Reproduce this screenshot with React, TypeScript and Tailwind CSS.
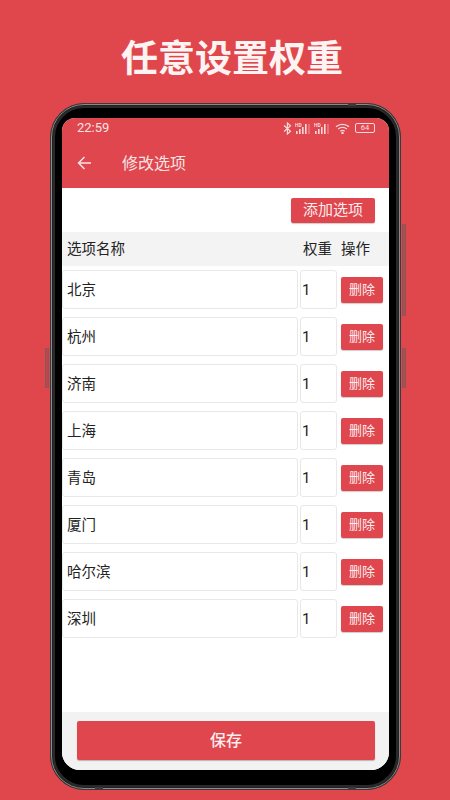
import React from "react";

const rows = ["北京", "杭州", "济南", "上海", "青岛", "厦门", "哈尔滨", "深圳"];

function Signal() {
  return (
    <svg width="16" height="12" viewBox="0 0 16 12" fill="#f6dadb">
      <text x="0" y="4.5" fontSize="5" fontWeight="700" fontFamily="Roboto, sans-serif">HD</text>
      <rect x="1" y="9" width="1.6" height="3" />
      <rect x="4" y="7" width="1.6" height="5" />
      <rect x="7" y="5" width="1.6" height="7" />
      <rect x="10" y="2" width="1.6" height="10" />
      <rect x="13.5" y="2" width="1" height="10" opacity="0.6" />
    </svg>
  );
}

function Row({ name }: { name: string }) {
  return (
    <div className="flex h-[47px] items-start pt-[4px]">
      <div className="flex h-[39px] w-[236px] items-center rounded-[3px] border border-[#e8e8e8] pl-[4px] pt-[2px] text-[14.5px] text-[#222222]">
        {name}
      </div>
      <div className="ml-[2px] flex h-[39px] w-[37px] items-center rounded-[3px] border border-[#e8e8e8] pl-[1px] pt-[2px] text-[15px] text-[#222222]">
        1
      </div>
      <div className="ml-[4px] mt-[7px] flex h-[26px] w-[42px] items-center justify-center rounded-[2px] bg-[#df464d] text-[13px] text-[#fbeeee] shadow-[0_1px_1px_rgba(0,0,0,0.2)]">
        删除
      </div>
    </div>
  );
}

export default function App() {
  return (
    <div className="flex h-[800px] w-[450px] flex-col items-center overflow-hidden bg-[#e0474c] font-['Roboto','Noto_Sans_CJK_SC',sans-serif]">
      <h1 className="ml-[14px] mt-[37px] h-[66px] text-[37px] font-bold leading-[46px] text-[#fdf3f3]">
        任意设置权重
      </h1>

      <div className="relative ml-[1px] h-[687px] w-[351px] rounded-[34px] border border-[#3a3a3a] bg-[#141414]">
        <div className="absolute left-[-6px] top-[244px] h-[40px] w-[4px] rounded-l-[1px] border border-[#7d5a5c] bg-[#b9474b]" />
        <div className="absolute right-[-6px] top-[120px] h-[92px] w-[4px] rounded-r-[1px] border border-[#7d5a5c] bg-[#b9474b]" />
        <div className="absolute right-[-6px] top-[244px] h-[40px] w-[4px] rounded-r-[1px] border border-[#7d5a5c] bg-[#b9474b]" />
        <div className="absolute left-[44px] bottom-[-1px] h-[3px] w-[8px] bg-[#3a3a3a]" />
        <div className="absolute right-[44px] bottom-[-1px] h-[3px] w-[8px] bg-[#3a3a3a]" />
        <div className="absolute right-[44px] top-[-1px] h-[3px] w-[8px] bg-[#3a3a3a]" />

        <div className="h-full w-full rounded-[33px] border border-[#8a8a8a] bg-[#222222] p-[1px]">
          <div className="h-full w-full rounded-[31px] border-[2px] border-[#2a2a2a] bg-black px-[7px] pb-[14px] pt-[10px]">
            <div className="flex h-[652px] w-[327px] flex-col overflow-hidden rounded-b-[18px] rounded-t-[13px] bg-white">
              <div className="flex h-[20px] shrink-0 items-center justify-between bg-[#df464d] pl-[15px] pr-[14px] text-[13px] text-[#f8e4e4]">
                <span>22:59</span>
                <div className="flex items-center gap-[3px]">
                  <svg width="9" height="13" viewBox="0 0 9 13" fill="none" stroke="#f6dadb" strokeWidth="1.2">
                    <path d="M1 3.5 7.5 9.2 4.4 12V1l3.1 2.8L1 9.5" />
                  </svg>
                  <Signal />
                  <Signal />
                  <svg className="ml-[2px]" width="15" height="11" viewBox="0 0 15 11" fill="none" stroke="#f6dadb" strokeWidth="1.3">
                    <path d="M1 3.8c3.6-3.2 9.4-3.2 13 0M3.2 6c2.4-2.1 6.2-2.1 8.6 0M5.4 8.2c1.2-1 3-1 4.2 0" />
                    <circle cx="7.5" cy="10" r="0.6" fill="#f6dadb" />
                  </svg>
                  <div className="ml-[2px] flex h-[10px] w-[20px] items-center justify-center rounded-[2px] border border-[#f6dadb] text-[7.5px] leading-none">
                    64
                  </div>
                </div>
              </div>

              <div className="flex h-[50px] shrink-0 items-center bg-[#df464d] pl-[15px] text-[#f8e4e4]">
                <svg width="15" height="14" viewBox="0 0 15 14" fill="none" stroke="#f8e4e4" strokeWidth="1.5">
                  <path d="M14 7H1.5M7.5 1 1.5 7l6 6" />
                </svg>
                <span className="ml-[30px] pt-[1px] text-[16px]">修改选项</span>
              </div>

              <div className="flex h-[44px] shrink-0 items-start justify-end pr-[14px] pt-[10px]">
                <div className="flex h-[25px] w-[84px] items-center justify-center rounded-[2px] bg-[#df464d] text-[15px] text-[#fbeeee] shadow-[0_1px_1px_rgba(0,0,0,0.2)]">
                  添加选项
                </div>
              </div>

              <div className="flex h-[34px] shrink-0 items-center bg-[#f3f3f3] pl-[5px] pt-[1px] text-[14.5px] text-[#222222]">
                <span className="w-[236px]">选项名称</span>
                <span className="w-[38px]">权重</span>
                <span>操作</span>
              </div>

              <div className="flex-1">
                {rows.map((r) => (
                  <Row key={r} name={r} />
                ))}
              </div>

              <div className="h-[58px] shrink-0 bg-[#f2f2f2] pl-[15px] pt-[9px]">
                <div className="flex h-[39px] w-[298px] items-center justify-center rounded-[2px] bg-[#df464d] pt-[1px] text-[16px] font-medium text-[#fbeeee] shadow-[0_1px_1px_rgba(0,0,0,0.25)]">
                  保存
                </div>
              </div>
            </div>
          </div>
        </div>
      </div>
    </div>
  );
}
